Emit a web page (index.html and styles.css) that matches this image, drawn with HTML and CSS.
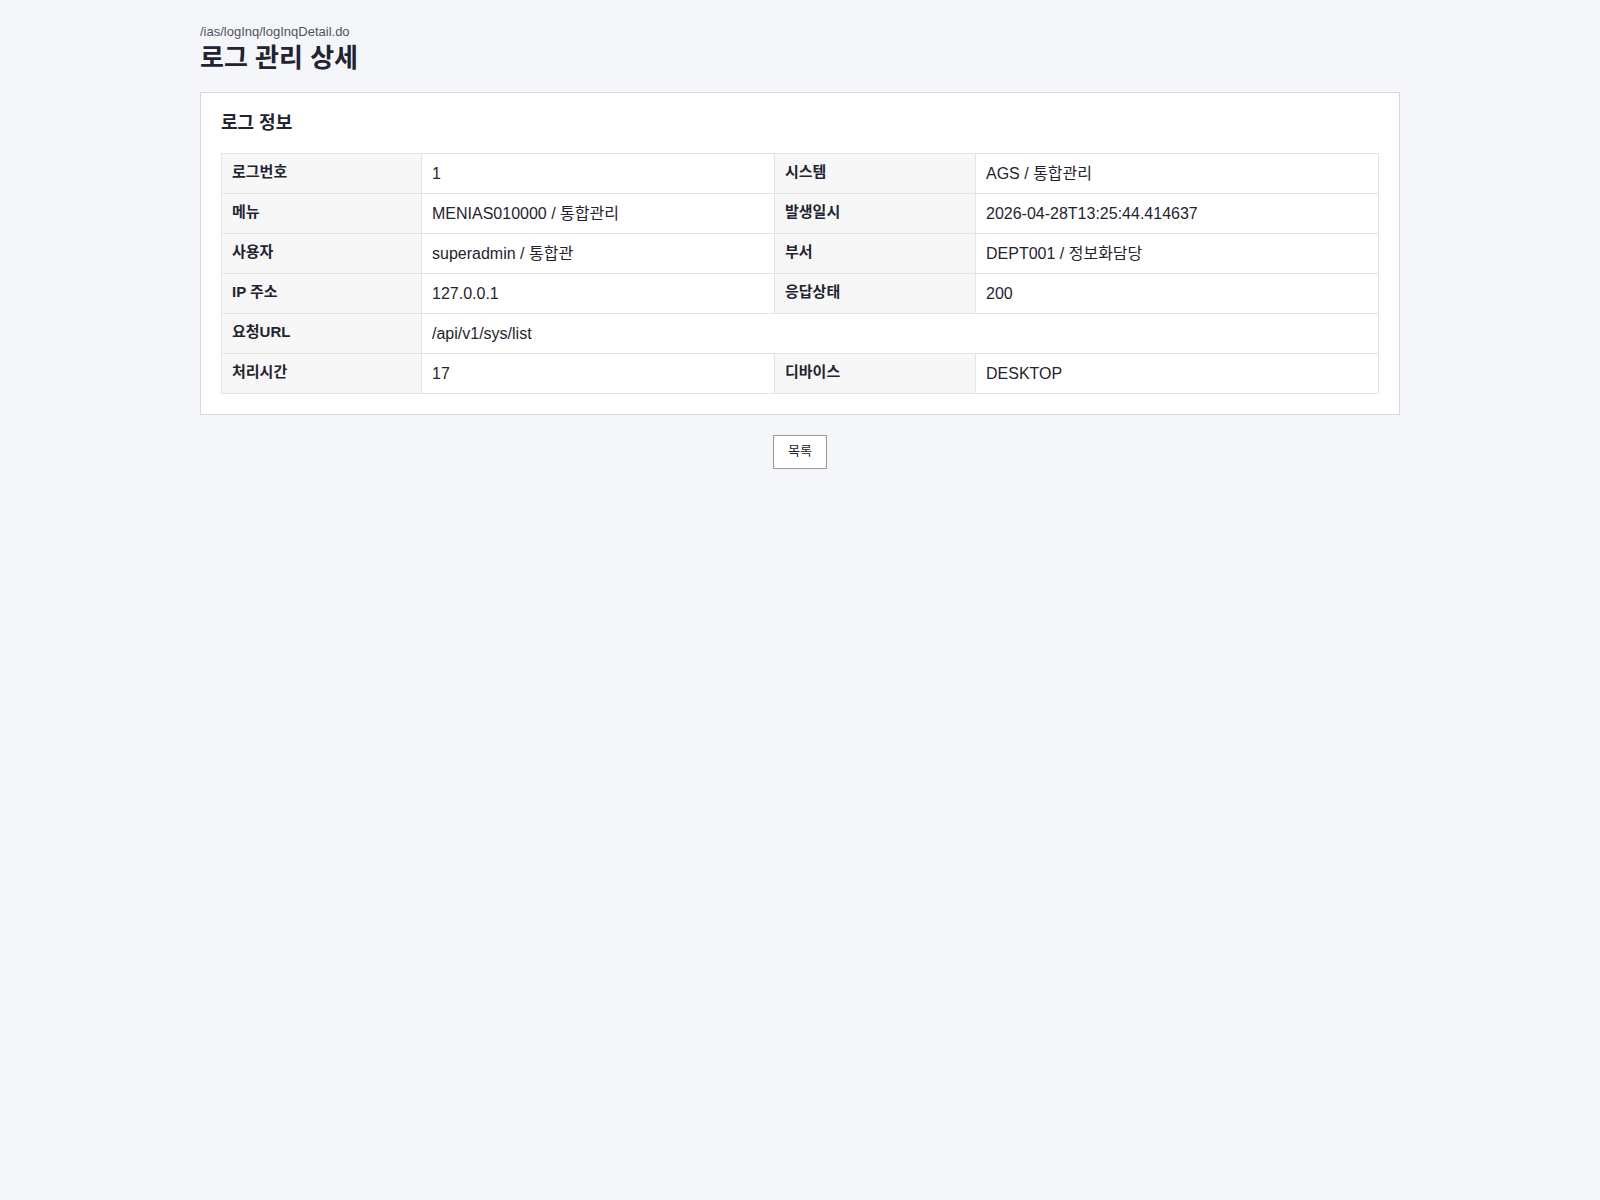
FILE: index.html
```html
<!DOCTYPE html>
<html lang="ko">
<head>
<meta charset="utf-8">
<title>로그 관리 상세</title>
<link rel="stylesheet" href="styles.css">
</head>
<body>
<div class="page">
  <div class="page-path">/ias/logInq/logInqDetail.do</div>
  <h1 class="page-title">로그 관리 상세</h1>
  <section class="card">
    <h3 class="card-title">로그 정보</h3>
    <table class="detail">
      <colgroup>
        <col class="c-th1">
        <col class="c-td1">
        <col class="c-th2">
        <col>
      </colgroup>
      <tbody>
        <tr><th>로그번호</th><td>1</td><th>시스템</th><td>AGS / 통합관리</td></tr>
        <tr><th>메뉴</th><td>MENIAS010000 / 통합관리</td><th>발생일시</th><td>2026-04-28T13:25:44.414637</td></tr>
        <tr><th>사용자</th><td>superadmin / 통합관</td><th>부서</th><td>DEPT001 / 정보화담당</td></tr>
        <tr><th>IP 주소</th><td>127.0.0.1</td><th>응답상태</th><td>200</td></tr>
        <tr><th>요청URL</th><td colspan="3">/api/v1/sys/list</td></tr>
        <tr><th>처리시간</th><td>17</td><th>디바이스</th><td>DESKTOP</td></tr>
      </tbody>
    </table>
  </section>
  <div class="actions">
    <button class="btn" type="button">목록</button>
  </div>
</div>
</body>
</html>
```

FILE: styles.css
```css
* { box-sizing: border-box; }
html, body {
  margin: 0;
  padding: 0;
  background: #f5f6fa;
  font-family: "Liberation Sans", Arial, "Noto Sans CJK KR", sans-serif;
  color: #1f2430;
}
.page {
  width: 1200px;
  margin: 0 auto;
  padding-top: 24px;
}
.page-path {
  font-size: 13px;
  line-height: 16px;
  color: #4b5563;
}
.page-title {
  margin: 0 0 16px;
  font-size: 26px;
  line-height: 36px;
  font-weight: 700;
  color: #1f2430;
}
.card {
  background: #ffffff;
  border: 1px solid #d6d8de;
  padding: 20px;
}
.card-title {
  margin: 0 0 20px;
  font-size: 18px;
  line-height: 20px;
  font-weight: 700;
  color: #1f2430;
}
.detail {
  width: 100%;
  border-collapse: collapse;
  table-layout: fixed;
  border: 1px solid #e3e4e6;
}
.c-th1 { width: 200px; }
.c-td1 { width: 353px; }
.c-th2 { width: 201px; }
.detail th,
.detail td {
  border: 1px solid #e3e4e6;
  padding: 0 10px;
  height: 40px;
  line-height: 20px;
  text-align: left;
  vertical-align: middle;
}
.detail th {
  background: #f7f7f8;
  font-size: 15px;
  font-weight: 700;
  color: #1f2430;
  padding-bottom: 4px;
}
.detail td {
  font-size: 16px;
  color: #1f2430;
}
.actions {
  display: flex;
  justify-content: center;
  margin-top: 20px;
}
.btn {
  width: 54px;
  height: 34px;
  background: #ffffff;
  border: 1px solid #999999;
  border-radius: 0;
  font-family: "Liberation Sans", Arial, "Noto Sans CJK KR", sans-serif;
  font-size: 13px;
  line-height: 16px;
  color: #222222;
  padding: 0 0 2px;
  cursor: pointer;
}
```
